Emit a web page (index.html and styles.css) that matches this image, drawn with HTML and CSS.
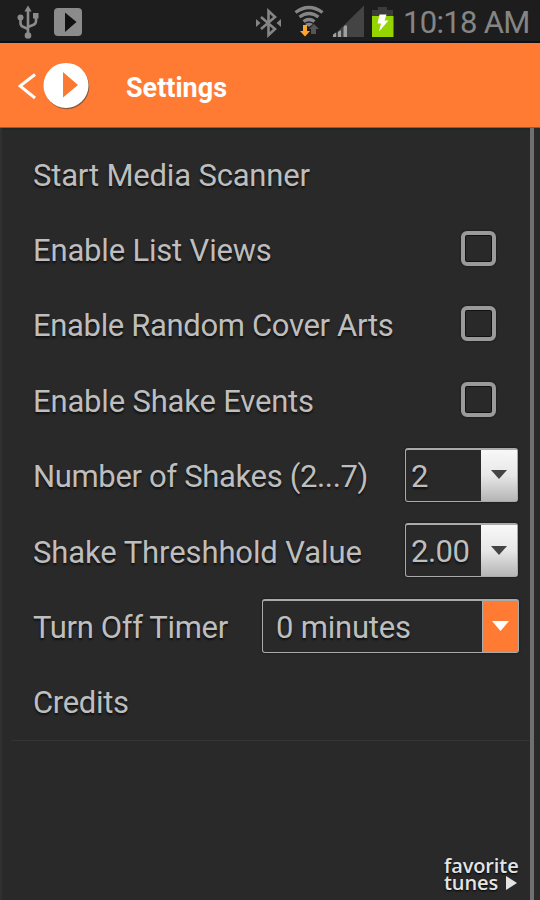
FILE: index.html
```
<!DOCTYPE html>
<html lang="en">
<head>
<meta charset="utf-8">
<title>Settings</title>
<link rel="stylesheet" href="styles.css">
</head>
<body>
<div class="screen">
  <div class="status">
    <svg class="status-left" width="90" height="42" viewBox="0 0 90 42">
      <g fill="none" stroke="#8b8b8b" stroke-width="2.600">
        <path d="M28 9V35M20.500 18v5q0 3 3 4l4.500 2M36 16v5q0 3-3 4l-5 2"/>
      </g>
      <path d="M28 5.500l3.600 6h-7.200zM33 13h5.500v5.500H33z" fill="#8b8b8b"/>
      <circle cx="20.500" cy="17.500" r="3" fill="#8b8b8b"/>
      <circle cx="28" cy="35.500" r="3.300" fill="#8b8b8b"/>
      <rect x="54" y="8" width="28" height="28" rx="4" fill="#8b8b8b"/>
      <path d="M65 12.500L76.500 22 65 32z" fill="#111"/>
    </svg>
    <div class="status-right">
      <svg width="144" height="42" viewBox="250 0 144 42">
        <path d="M261 17l14 12-6.500 6V11l6.500 6-14 12" fill="none" stroke="#858585" stroke-width="2.600"/>
        <path d="M256 19l4.500 4-4.500 4zM281 19v8L276.500 23z" fill="#858585"/>
        <g fill="none" stroke="#858585" stroke-width="3.300">
          <path d="M295.500 12.500q13.500-10 27 0M299.500 17q9.500-7 19 0M303.500 21.500q5.500-4 11 0"/>
        </g>
        <path d="M305 24q4-2.500 8 0l-4 3z" fill="#858585"/>
        <path d="M311 34V29h-2l5-5 5 5h-3v5z" fill="#555"/>
        <path d="M303 25h4v6h3l-5 5.500-5-5.500h3z" fill="#ffa52c"/>
        <path d="M332 37L364 5.500V37z" fill="#444"/>
        <path d="M333 37v-2.500l3-2V37zM338 37v-5l2-1.500h1V37zM343.500 37V27.500l1-2h2.500V37z" fill="#a0a0a0"/>
        <path d="M378 7h9v3h6v6h-21v-6h6z" fill="#3c3c3c"/>
        <path d="M372 16h21.500v21H372z" fill="#94d500"/>
        <path d="M379.500 14.500h7l-2 6h4L379 31.500l2-8h-3.500z" fill="#fff"/>
      </svg>
      <span class="clock">10:18 AM</span>
    </div>
  </div>
  <div class="header">
    <svg width="74" height="60" viewBox="18 55 74 60">
      <path d="M35 74.500L20 86l15 12" fill="none" stroke="#fff" stroke-width="3"/>
      <circle cx="66.800" cy="86.700" r="22.500" fill="#8b5a3c"/>
      <circle cx="66" cy="85.400" r="22.500" fill="#fff"/>
      <path d="M63 72l15 13-15 12.500z" fill="#fb7a32"/>
    </svg>
    <h1 class="title">Settings</h1>
  </div>
  <div class="content">
    <div class="list">
      <div class="row"><span class="label">Start Media Scanner</span></div>
      <div class="row"><span class="label">Enable List Views</span><span class="check"></span></div>
      <div class="row"><span class="label snug">Enable Random Cover Arts</span><span class="check"></span></div>
      <div class="row"><span class="label">Enable Shake Events</span><span class="check"></span></div>
      <div class="row"><span class="label snug">Number of Shakes (2...7)</span>
        <div class="select"><span class="value">2</span><span class="arrow"><svg width="18" height="10" viewBox="0 0 18 10"><path d="M1 0h16L9 9z" fill="#444"/></svg></span></div></div>
      <div class="row"><span class="label loose">Shake Threshhold Value</span>
        <div class="select"><span class="value">2.00</span><span class="arrow"><svg width="18" height="10" viewBox="0 0 18 10"><path d="M1 0h16L9 9z" fill="#444"/></svg></span></div></div>
      <div class="row"><span class="label snug">Turn Off Timer</span>
        <div class="select wide"><span class="value">0 minutes</span><span class="arrow orange"><svg width="18" height="10" viewBox="0 0 18 10"><path d="M0 0h17L8.500 10z" fill="#fff"/></svg></span></div></div>
      <div class="row"><span class="label snug">Credits</span></div>
    </div>
    <div class="brand">
      <div>favorite</div>
      <div class="brand-line"><span class="brand-word">tunes</span><svg width="11" height="14" viewBox="0 0 11 14"><path d="M0 0l11 7-11 7z" fill="#e4e4e4"/></svg></div>
    </div>
  </div>
</div>
</body>
</html>
```
FILE: styles.css
```
* { box-sizing: border-box; }
body { margin: 0; background: #292929; font-family: Roboto, sans-serif; }
.screen { width: 540px; height: 900px; overflow: hidden; display: flex; flex-direction: column; }
.status { height: 43px; background: #1d1d1d; border-bottom: 2px solid #0d0f18; display: flex; justify-content: space-between; flex: none; }
.status-right { display: flex; width: 290px; }
.status svg { flex: none; }
.clock { margin-left: 9px; font-size: 31px; line-height: 45px; letter-spacing: -0.7px; color: #858585; white-space: nowrap; }
.header { height: 85px; flex: none; background: #ff7b33; border-bottom: 1px solid #9c5836; display: flex; align-items: center; padding: 0 0 0 18px; }
.title { margin: 5px 0 0 34px; font-size: 27px; line-height: 32px; font-weight: 700; color: #fff; }
.content { flex: 1; width: 534px; border-left: 2px solid #303030; border-right: 4px solid #707070; display: flex; flex-direction: column; padding-top: 9px; box-shadow: inset 0 2px #202525; }
.list { margin-left: 9px; border-bottom: 1px solid #343434; }
.row { height: 75.4px; padding: 0 12px 0 22px; display: flex; justify-content: space-between; align-items: center; }
.label, .value { font-size: 31px; line-height: 36px; letter-spacing: -0.18px; color: #bebebe; text-shadow: 0 2px 2px #111; white-space: nowrap; }
.label { padding-top: 2px; }
.label.snug { letter-spacing: -0.34px; }
.label.loose { letter-spacing: -0.1px; }
.check { width: 35px; height: 35px; margin: 0 22px 3px 0; border: 4px solid #9a9a9a; border-radius: 6px; box-shadow: inset 0 0 0 1px #111, 0 0 2px #111; }
.select { width: 113px; height: 54px; margin: 0 0 3px; border: 1px solid #aaa; border-top-width: 2px; border-radius: 3px; display: flex; justify-content: space-between; align-items: stretch; box-shadow: 0 0 2px #111; }
.select .value { line-height: 53px; margin-left: 5px; letter-spacing: -0.5px; }
.wide { width: 257px; margin-right: -1px; }
.wide .value { margin-left: 13px; letter-spacing: -0.2px; }
.arrow { width: 36px; flex: none; display: flex; align-items: center; justify-content: center; background: linear-gradient(#f8f8f8, #e7e7e7 50%, #b5b5b5); }
.orange { background: #ff7b33; border-left: 1px solid #aaa; }
.brand { margin: auto 9px 9px auto; width: 77px; font: 600 20px/17.5px "Open Sans", sans-serif; letter-spacing: -0.1px; color: #e4e4e4; text-shadow: 0 1px 2px #000; }
.brand-line { display: flex; align-items: center; gap: 8px; }
.brand-word { font-size: 20px; line-height: 17px; }
```
